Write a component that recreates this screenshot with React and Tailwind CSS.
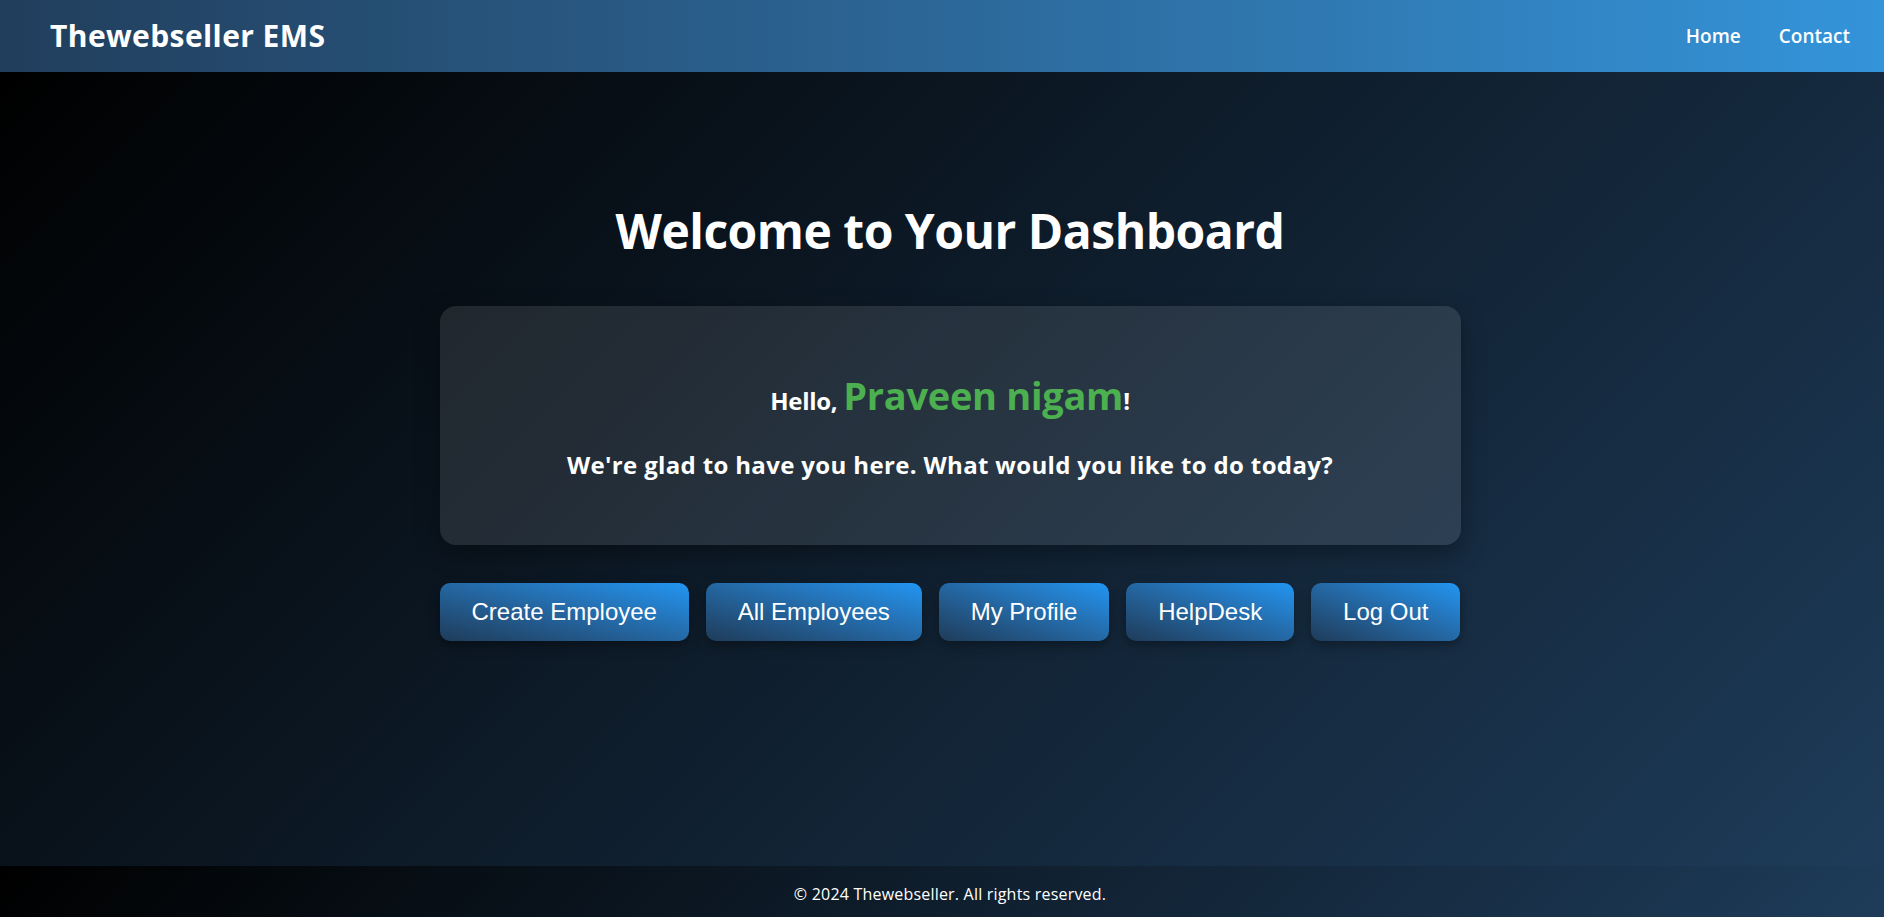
import React from 'react';

const actions = ['Create Employee', 'All Employees', 'My Profile', 'HelpDesk', 'Log Out'];

export default function App() {
  return (
    <div className="w-full overflow-hidden">
      <div className="w-[1900px] min-h-screen flex flex-col font-['Open_Sans','Noto_Sans',sans-serif] text-white">
        {/* Top bar */}
        <header className="h-[72px] shrink-0 flex items-center justify-between px-[50px] bg-linear-to-r from-[#213e5c] to-[#3495db]">
          <h1 className="text-[30px] font-bold leading-none tracking-[0.4px]">Thewebseller EMS</h1>
          <nav className="flex items-center gap-[38px] text-[19px] font-semibold">
            <a href="#" className="text-white">Home</a>
            <a href="#" className="text-white">Contact</a>
          </nav>
        </header>

        {/* Dashboard */}
        <main className="flex-1 flex flex-col items-center pt-[135px] bg-[linear-gradient(135deg,#000000,#1e3c5a)]">
          <h2 className="text-[48px] font-bold leading-none tracking-[-0.5px]">Welcome to Your Dashboard</h2>

          <section className="mt-[51px] w-[1021px] rounded-2xl bg-white/10 pt-[70px] pb-[68px] text-center shadow-[0_8px_24px_rgba(0,0,0,0.35)]">
            <p className="text-[24px] font-bold leading-none tracking-[-0.3px]">
              Hello, <span className="text-[38px] text-[#4caf50]">Praveen nigam</span>!
            </p>
            <p className="mt-[39px] text-[24px] font-bold leading-none tracking-[0.35px]">
              We're glad to have you here. What would you like to do today?
            </p>
          </section>

          <div className="mt-[38px] w-[1021px] flex justify-between">
            {actions.map((label) => (
              <button
                key={label}
                className="h-[58px] px-[32px] rounded-[10px] bg-linear-to-tr from-[#1e3c5a] to-[#2196f3] font-['Liberation_Sans',Arial,sans-serif] text-[24px] text-white shadow-[0_4px_12px_rgba(0,0,0,0.35)]"
              >
                {label}
              </button>
            ))}
          </div>
        </main>

        <footer className="shrink-0 pt-[17px] pb-[11px] text-center text-[16px] leading-[23px] tracking-[0.2px] bg-[linear-gradient(135deg,#000000,#1e3c5a)]">
          © 2024 Thewebseller. All rights reserved.
        </footer>
      </div>
    </div>
  );
}
